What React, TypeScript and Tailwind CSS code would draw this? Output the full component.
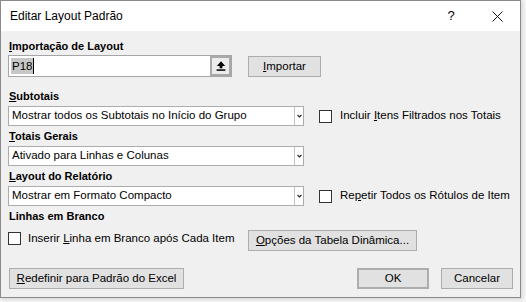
import React from 'react'

function Btn({ children, className = '' }: { children: React.ReactNode; className?: string }) {
  return (
    <div className={`flex items-center justify-center h-[21px] bg-[#e1e1e1] border border-[#adadad] text-black ${className}`}>
      {children}
    </div>
  )
}

function Select({ value }: { value: string }) {
  return (
    <div className="flex h-[20px] w-[296px] border border-[#acacac] bg-white">
      <div className="flex-1 flex items-center pl-[3px] whitespace-nowrap">{value}</div>
      <div className="w-[9px] border-l border-[#c4c4c4] flex items-center justify-center">
        <svg width="5" height="4" viewBox="0 0 5 4">
          <path d="M0.5 1 L2.5 3 L4.5 1" stroke="#222" strokeWidth="1.1" fill="none" />
        </svg>
      </div>
    </div>
  )
}

function Check({ children }: { children: React.ReactNode }) {
  return (
    <div className="flex items-center gap-[8px] whitespace-nowrap">
      <div className="w-[13px] h-[13px] border border-[#333] bg-white" />
      <span>{children}</span>
    </div>
  )
}

function Label({ children, className = '' }: { children: React.ReactNode; className?: string }) {
  return <div className={`h-[19px] flex items-center pl-[1px] font-bold text-[11px] ${className}`}>{children}</div>
}

export default function App() {
  return (
    <div className="w-[526px] h-[302px] bg-[#f4f4f4] font-['Liberation_Sans',Arial,sans-serif] text-[11.5px] text-black">
      <div className="w-[521px] h-[298px] border border-[#8a8a8a] bg-[#f0f0f0] flex flex-col shadow-[1px_1px_4px_rgba(0,0,0,0.15)]">
        {/* barra de título */}
        <div className="h-[30px] bg-white flex items-center">
          <span className="pl-[9px] flex-1 text-[12px]">Editar Layout Padrão</span>
          <div className="w-[46px] h-full flex items-center justify-center text-[13px]">?</div>
          <div className="w-[46px] h-full flex items-center justify-center">
            <svg width="11" height="11" viewBox="0 0 11 11">
              <path d="M0.5 0.5 L10.5 10.5 M10.5 0.5 L0.5 10.5" stroke="#111" strokeWidth="1" />
            </svg>
          </div>
        </div>

        <div className="flex flex-col pl-[7px] pt-[6px]">
          <div className="h-[18px] flex items-center pl-[1px] font-bold text-[11px]">
            <span><span className="underline">I</span>mportação de Layout</span>
          </div>
          <div className="flex items-start">
            <div className="w-[224px] h-[22px] border border-[#a5a5a5] bg-white flex">
              <div className="flex-1 flex items-center pl-[2px]">
                <span className="bg-[#c7c7c7] px-[1px] leading-[16px]">P18</span>
                <span className="w-[1px] h-[16px] bg-black" />
              </div>
              <div className="w-[21px] h-full border-2 border-[#a9a9a9] bg-[#ececec] flex items-center justify-center">
                <svg width="10" height="10" viewBox="0 0 10 10">
                  <path d="M5 0.3 L9.2 5 L6.4 5 L6.4 7.3 L3.6 7.3 L3.6 5 L0.8 5 Z" fill="#000" />
                  <rect x="0.6" y="8.3" width="8.8" height="1.5" fill="#000" />
                </svg>
              </div>
            </div>
            <Btn className="ml-[16px] mt-[1px] w-[73px]">
              <span><span className="underline">I</span>mportar</span>
            </Btn>
          </div>

          <Label className="mt-[10px]">
            <span><span className="underline">S</span>ubtotais</span>
          </Label>
          <div className="flex items-center">
            <Select value="Mostrar todos os Subtotais no Início do Grupo" />
            <div className="ml-[15px]">
              <Check>Incluir <span className="underline">I</span>tens Filtrados nos Totais</Check>
            </div>
          </div>

          <Label className="mt-[1px]">
            <span><span className="underline">T</span>otais Gerais</span>
          </Label>
          <Select value="Ativado para Linhas e Colunas" />

          <Label className="mt-[1px]">
            <span><span className="underline">L</span>ayout do Relatório</span>
          </Label>
          <div className="flex items-center">
            <Select value="Mostrar em Formato Compacto" />
            <div className="ml-[15px]">
              <Check>Re<span className="underline">p</span>etir Todos os Rótulos de Item</Check>
            </div>
          </div>

          <Label className="mt-[1px]">Linhas em Branco</Label>
          <div className="flex items-start mt-[4px]">
            <div className="w-[240px]">
              <div className="flex items-center gap-[7px] whitespace-nowrap">
                <div className="w-[13px] h-[13px] border border-[#333] bg-white" />
                <span>Inserir <span className="underline">L</span>inha em Branco após Cada Item</span>
              </div>
            </div>
            <Btn className="w-[169px] h-[20px]">
              <span><span className="underline">O</span>pções da Tabela Dinâmica...</span>
            </Btn>
          </div>

          <div className="flex items-center mt-[17px]">
            <Btn className="ml-[1px] w-[175px]">
              <span><span className="underline">R</span>edefinir para Padrão do Excel</span>
            </Btn>
            <div className="flex-1" />
            <Btn className="w-[72px] border-2 border-[#0078d7]">OK</Btn>
            <Btn className="ml-[12px] mr-[7px] w-[72px]">Cancelar</Btn>
          </div>
        </div>
      </div>
    </div>
  )
}
